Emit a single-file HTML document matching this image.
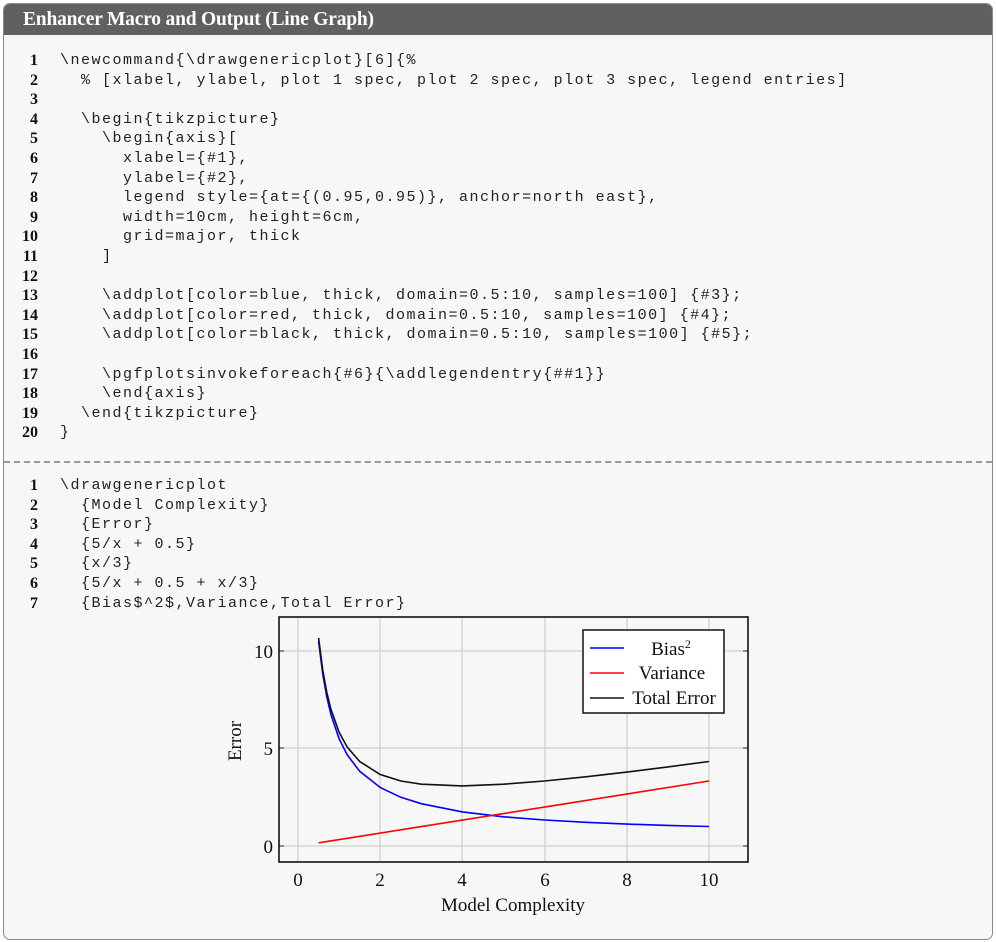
<!DOCTYPE html>
<html><head><meta charset="utf-8"><style>
body{margin:0;background:#fff;width:996px;height:942px;position:relative;overflow:hidden}
.box{position:absolute;left:3px;top:3px;width:988px;height:935px;border:1px solid #8a8a8a;border-radius:7px;background:#f7f7f7;overflow:hidden}
.hd{position:absolute;left:0;top:0;width:100%;height:31px;background:#606060;color:#fff;font:bold 19.5px "Liberation Serif",serif;line-height:31px;padding-left:19px;box-sizing:border-box;letter-spacing:-0.2px}
.ln{position:absolute;font:bold 16px "Liberation Serif",serif;width:38px;text-align:right;color:#111}
.cd{position:absolute;left:60px;font:15px "Liberation Mono",monospace;letter-spacing:1.5px;white-space:pre;color:#222}
.sep{position:absolute;left:4px;right:4px;top:461px;border-top:2px dashed #9a9a9a}
</style></head><body>
<div class="box"><div class="hd">Enhancer Macro and Output (Line Graph)</div></div>
<div class="sep"></div>
<div id="c"></div>
<script>
var a=["\\newcommand{\\drawgenericplot}[6]{%","  % [xlabel, ylabel, plot 1 spec, plot 2 spec, plot 3 spec, legend entries]","","  \\begin{tikzpicture}","    \\begin{axis}[","      xlabel={#1},","      ylabel={#2},","      legend style={at={(0.95,0.95)}, anchor=north east},","      width=10cm, height=6cm,","      grid=major, thick","    ]","","    \\addplot[color=blue, thick, domain=0.5:10, samples=100] {#3};","    \\addplot[color=red, thick, domain=0.5:10, samples=100] {#4};","    \\addplot[color=black, thick, domain=0.5:10, samples=100] {#5};","","    \\pgfplotsinvokeforeach{#6}{\\addlegendentry{##1}}","    \\end{axis}","  \\end{tikzpicture}","}"];
var b=["\\drawgenericplot","  {Model Complexity}","  {Error}","  {5/x + 0.5}","  {x/3}","  {5/x + 0.5 + x/3}","  {Bias$^2$,Variance,Total Error}"];
var h="";
function blk(arr,y0){arr.forEach(function(t,i){var y=y0+i*19.6;h+='<div class="ln" style="top:'+(y-10)+'px">'+(i+1)+'</div><div class="cd" style="top:'+(y-10)+'px">'+t.replace(/&/g,"&amp;").replace(/</g,"&lt;")+'</div>';});}
blk(a,62);blk(b,487);
document.getElementById("c").innerHTML=h;
</script>
<svg style="position:absolute;left:0;top:0" width="996" height="942" font-family="Liberation Serif,serif">
<g stroke="#d0d0d0" stroke-width="1.3">
<line x1="298" y1="617" x2="298" y2="862"/><line x1="380" y1="617" x2="380" y2="862"/><line x1="462" y1="617" x2="462" y2="862"/><line x1="545" y1="617" x2="545" y2="862"/><line x1="627" y1="617" x2="627" y2="862"/><line x1="709" y1="617" x2="709" y2="862"/>
<line x1="279" y1="846" x2="748" y2="846"/><line x1="279" y1="748" x2="748" y2="748"/><line x1="279" y1="651" x2="748" y2="651"/>
</g>
<g stroke="#222" stroke-width="1"><line x1="279" y1="846" x2="284" y2="846"/><line x1="279" y1="748" x2="284" y2="748"/><line x1="279" y1="651" x2="284" y2="651"/><line x1="743" y1="846" x2="748" y2="846"/><line x1="743" y1="748" x2="748" y2="748"/><line x1="743" y1="651" x2="748" y2="651"/></g>
<polyline fill="none" stroke="#0000ff" stroke-width="1.6" points="318.6,641.3 322.7,673.8 326.8,697 330.9,714.4 339.1,738.8 347.3,755 359.7,771.3 380.2,787.5 400.8,797.3 421.3,803.7 462.4,811.9 503.5,816.8 544.6,820 585.7,822.3 626.8,824.1 667.9,825.4 709,826.5"/>
<line x1="318.6" y1="842.8" x2="709" y2="781" stroke="#ff0000" stroke-width="1.6"/>
<polyline fill="none" stroke="#111" stroke-width="1.6" points="318.6,638 322.7,669.9 326.8,692.4 330.9,709.2 339.1,732.3 347.3,747.2 359.7,761.5 380.2,774.5 400.8,781 421.3,784.2 462.4,785.9 503.5,784.2 544.6,781 585.7,776.8 626.8,772.1 667.9,766.9 709,761.5"/>
<rect x="279" y="617" width="469" height="245" fill="none" stroke="#111" stroke-width="1.6"/>
<rect x="583" y="630" width="141" height="83" fill="#fff" stroke="#111" stroke-width="1.5"/>
<line x1="590" y1="648" x2="624" y2="648" stroke="#00f" stroke-width="1.6"/>
<line x1="590" y1="673" x2="624" y2="673" stroke="#f00" stroke-width="1.6"/>
<line x1="590" y1="698" x2="624" y2="698" stroke="#111" stroke-width="1.6"/>
<g font-size="19" fill="#111" text-anchor="middle">
<text x="671" y="655">Bias<tspan font-size="12" dy="-7">2</tspan></text>
<text x="672" y="679">Variance</text>
<text x="674" y="704">Total Error</text>
<text x="298" y="886">0</text><text x="380" y="886">2</text><text x="462" y="886">4</text><text x="545" y="886">6</text><text x="627" y="886">8</text><text x="709" y="886">10</text>
<text x="513" y="911">Model Complexity</text>
<text x="241" y="741" transform="rotate(-90 241 741)">Error</text>
</g>
<g font-size="19" fill="#111" text-anchor="end"><text x="273" y="658">10</text><text x="273" y="755">5</text><text x="273" y="853">0</text></g>
</svg>
</body></html>
